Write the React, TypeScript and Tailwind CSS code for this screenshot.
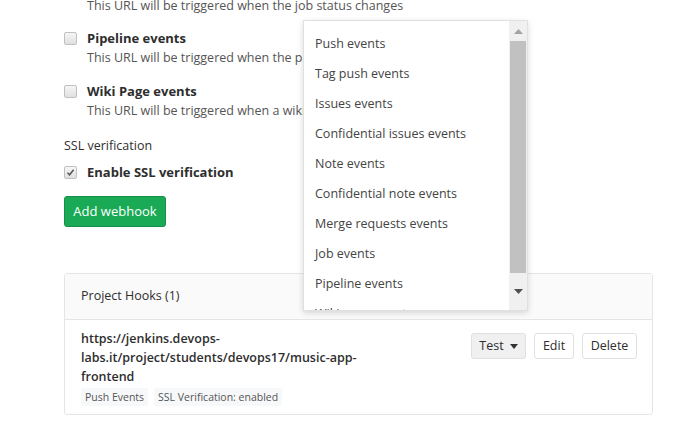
import React from "react";

function Box({ checked }: { checked?: boolean }) {
  return (
    <div className="w-[13px] h-[13px] shrink-0 rounded-[2px] border border-[#c0c0c0] bg-gradient-to-b from-[#f6f6f6] to-[#e0e0e0] flex items-center justify-center">
      {checked && (
        <svg width="9" height="9" viewBox="0 0 9 9">
          <path d="M1.5 4.8 L3.6 6.8 L7.6 1.8" stroke="#555" strokeWidth="1.5" fill="none" />
        </svg>
      )}
    </div>
  );
}

const items = [
  "Push events",
  "Tag push events",
  "Issues events",
  "Confidential issues events",
  "Note events",
  "Confidential note events",
  "Merge requests events",
  "Job events",
  "Pipeline events",
  "Wiki page events",
];

export default function App() {
  return (
    <div
      className="relative w-[677px] h-[428px] overflow-hidden bg-white text-[#2e2e2e]"
      style={{ fontFamily: '"Open Sans", "Noto Sans", sans-serif' }}
    >
      <div className="pl-[64px] pr-[24px]">
        <div className="pl-[23px] mt-[-4.5px] text-[12.5px] leading-[19px] text-[#555]">
          This URL will be triggered when the job status changes
        </div>

        <div className="mt-[14px]">
          <div className="flex items-center gap-[10px] leading-[19px]">
            <Box />
            <span className="text-[13px] font-bold text-[#2e2e2e]">Pipeline events</span>
          </div>
          <div className="pl-[23px] text-[12.5px] leading-[19px] text-[#555]">
            This URL will be triggered when the pipeline status changes
          </div>
        </div>

        <div className="mt-[15px]">
          <div className="flex items-center gap-[10px] leading-[19px]">
            <Box />
            <span className="text-[13px] font-bold text-[#2e2e2e]">Wiki Page events</span>
          </div>
          <div className="pl-[23px] text-[12.5px] leading-[19px] text-[#555]">
            This URL will be triggered when a wiki page is created/updated
          </div>
        </div>

        <div className="mt-[16px] text-[12.5px] leading-[19px] text-[#2e2e2e]">SSL verification</div>

        <div className="mt-[8px] flex items-center gap-[10px] leading-[19px]">
          <Box checked />
          <span className="text-[13px] font-bold text-[#2e2e2e]">Enable SSL verification</span>
        </div>

        <button className="mt-[14.5px] h-[31px] w-[102px] rounded-[3px] bg-[#1aaa55] border border-[#168f48] text-white text-[13px] flex items-center justify-center">
          Add webhook
        </button>

        <div className="mt-[46px] w-[589px] rounded-[3px] border border-[#e5e5e5]">
          <div className="h-[46px] bg-[#fafafa] border-b border-[#e5e5e5] flex items-center pl-[16px] text-[12.5px] text-[#2e2e2e]">
            Project Hooks (1)
          </div>
          <div className="flex pl-[16px] pr-[15px] pt-[9px] pb-[8px]">
            <div className="flex-1">
              <div className="text-[12.5px] leading-[19px] font-semibold text-[#2e2e2e]">
                https://jenkins.devops-
                <br />
                labs.it/project/students/devops17/music-app-
                <br />
                frontend
              </div>
              <div className="mt-[2px] flex gap-[6px]">
                <span className="h-[18px] px-[4px] rounded-[2px] bg-[#f7f8fa] text-[10.5px] leading-[18px] text-[#555]">
                  Push Events
                </span>
                <span className="h-[18px] px-[4px] rounded-[2px] bg-[#f7f8fa] text-[10.5px] leading-[18px] text-[#555]">
                  SSL Verification: enabled
                </span>
              </div>
            </div>
            <div className="flex gap-[8px] items-start mt-[4px]">
              <button className="h-[26px] w-[55px] rounded-[3px] bg-[#f0f0f0] border border-[#e0e0e0] text-[12.5px] text-[#2e2e2e] flex items-center justify-center gap-[6px]">
                Test
                <svg width="8" height="5" viewBox="0 0 8 5">
                  <path d="M0 0 L8 0 L4 5 Z" fill="#333" />
                </svg>
              </button>
              <button className="h-[26px] w-[40px] rounded-[3px] bg-white border border-[#e0e0e0] text-[12.5px] text-[#2e2e2e]">
                Edit
              </button>
              <button className="h-[26px] w-[55px] rounded-[3px] bg-white border border-[#e0e0e0] text-[12.5px] text-[#2e2e2e]">
                Delete
              </button>
            </div>
          </div>
        </div>
      </div>

      {/* dropdown overlay */}
      <div className="absolute left-[303px] top-[20px] w-[225px] h-[291px] bg-white border border-[#e0e0e0] shadow-[0_2px_6px_rgba(0,0,0,0.15)] flex">
        <div className="flex-1 overflow-hidden pt-[8px]">
          {items.map((t) => (
            <div key={t} className="h-[30px] flex items-center pl-[11px] text-[12.5px] text-[#444] whitespace-nowrap">
              {t}
            </div>
          ))}
        </div>
        <div className="w-[18px] bg-[#f0f0f0] flex flex-col items-center">
          <div className="h-[20px] flex items-center justify-center">
            <svg width="9" height="5" viewBox="0 0 9 5">
              <path d="M0 5 L4.5 0 L9 5 Z" fill="#a3a3a3" />
            </svg>
          </div>
          <div className="w-[16px] h-[232px] bg-[#c1c1c1]" />
          <div className="flex-1 flex items-center justify-center">
            <svg width="9" height="5" viewBox="0 0 9 5">
              <path d="M0 0 L9 0 L4.5 5 Z" fill="#505050" />
            </svg>
          </div>
        </div>
      </div>
    </div>
  );
}
